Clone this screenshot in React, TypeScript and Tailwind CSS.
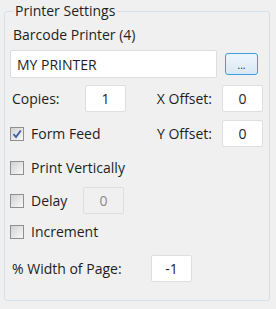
import React, { useState } from "react";

const font = { fontFamily: '"Open Sans", "Noto Sans", sans-serif' };

type CheckProps = {
  label: string;
  checked: boolean;
  onToggle: () => void;
};

const Check: React.FC<CheckProps> = ({ label, checked, onToggle }) => {
  return (
    <label className="flex items-center gap-[7px] cursor-default" onClick={onToggle}>
      <span className="w-[14px] h-[14px] border border-[#8e8f8f] bg-gradient-to-br from-[#d2d2d2] to-[#f9f9f9] flex items-center justify-center">
        {checked ? (
          <svg width="10" height="10" viewBox="0 0 10 10">
            <path d="M1.5 5.2 L4 8 L8.8 1.5" fill="none" stroke="#3a5fa8" strokeWidth="1.8" />
          </svg>
        ) : null}
      </span>
      <span>{label}</span>
    </label>
  );
};

const Box: React.FC<{ value: string; disabled?: boolean; className?: string }> = ({
  value,
  disabled,
  className,
}) => (
  <div
    className={
      "h-[27px] border border-[#dedede] rounded-[2px] flex items-center justify-center " +
      (disabled ? "bg-[#f0f0f0] text-[#8a8a8a] " : "bg-white ") +
      (className ?? "")
    }
  >
    {value}
  </div>
);

export default function App() {
  const [formFeed, setFormFeed] = useState(true);
  const [vertical, setVertical] = useState(false);
  const [delay, setDelay] = useState(false);
  const [increment, setIncrement] = useState(false);

  return (
    <div className="w-[276px] h-[309px] bg-[#f0f0f0] text-[14px] text-[#1e1e1e] pt-[2px]" style={font}>
      <fieldset className="mx-[4px] w-[266px] h-[299px] border border-[#d5dfe5] rounded-[3px] pl-[5px] pr-[6px]">
        <legend className="ml-[3px] px-[2px] leading-[18px]">Printer Settings</legend>
        <div className="pl-[3px] mt-[6px] leading-[18px]">Barcode Printer (4)</div>
        <div className="flex items-center mt-[6px]">
          <div className="w-[207px] h-[28px] bg-white border border-[#dedede] rounded-[2px] pl-[6px] flex items-center">
            MY PRINTER
          </div>
          <button className="ml-[8px] w-[33px] h-[22px] rounded-[3px] border border-[#3c9ee0] bg-gradient-to-b from-[#eef6fc] to-[#d8e8f4] text-[10px] leading-none flex items-end justify-center pb-[4px]">
            ...
          </button>
        </div>
        <div className="flex items-center mt-[7px]">
          <span className="w-[75px] pl-[2px]">Copies:</span>
          <Box value="1" className="w-[41px]" />
          <span className="ml-auto mr-[10px]">X Offset:</span>
          <Box value="0" className="w-[41px]" />
        </div>
        <div className="flex items-center mt-[8px]">
          <Check label="Form Feed" checked={formFeed} onToggle={() => setFormFeed(!formFeed)} />
          <span className="ml-auto mr-[10px]">Y Offset:</span>
          <Box value="0" className="w-[41px]" />
        </div>
        <div className="flex items-center h-[27px] mt-[7px]">
          <Check label="Print Vertically" checked={vertical} onToggle={() => setVertical(!vertical)} />
        </div>
        <div className="flex items-center mt-[6px]">
          <div className="w-[73px]">
            <Check label="Delay" checked={delay} onToggle={() => setDelay(!delay)} />
          </div>
          <Box value="0" disabled className="w-[41px]" />
        </div>
        <div className="flex items-center h-[27px] mt-[4px]">
          <Check label="Increment" checked={increment} onToggle={() => setIncrement(!increment)} />
        </div>
        <div className="flex items-center mt-[10px]">
          <span className="w-[141px] pl-[2px]">% Width of Page:</span>
          <Box value="-1" className="w-[41px]" />
        </div>
      </fieldset>
    </div>
  );
}
